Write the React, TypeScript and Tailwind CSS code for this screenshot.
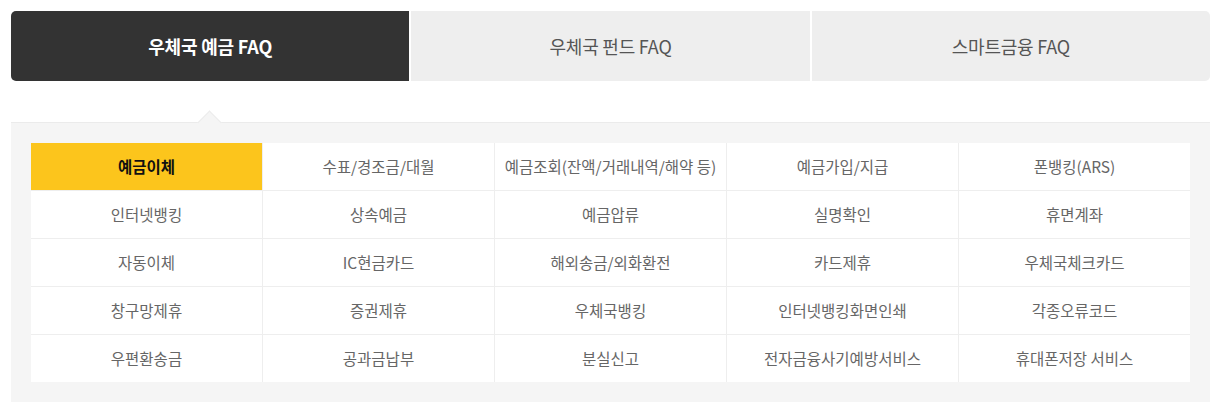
import React from 'react';

const tabs = ['우체국 예금 FAQ', '우체국 펀드 FAQ', '스마트금융 FAQ'];

const categories = [
    '예금이체', '수표/경조금/대월', '예금조회(잔액/거래내역/해약 등)', '예금가입/지급', '폰뱅킹(ARS)',
    '인터넷뱅킹', '상속예금', '예금압류', '실명확인', '휴면계좌',
    '자동이체', 'IC현금카드', '해외송금/외화환전', '카드제휴', '우체국체크카드',
    '창구망제휴', '증권제휴', '우체국뱅킹', '인터넷뱅킹화면인쇄', '각종오류코드',
    '우편환송금', '공과금납부', '분실신고', '전자금융사기예방서비스', '휴대폰저장 서비스',
];

export default function App() {
    const activeTab = 0;
    const activeCat = 0;

    return (
        <div
            className="w-[1200px] mx-auto pt-[11px] bg-white"
            style={{ fontFamily: '"Noto Sans CJK KR", "Noto Sans", sans-serif' }}
        >
            {/* Tabs */}
            <ul className="flex gap-[2px] h-[70px] pl-px">
                {tabs.map((tab, i) => (
                    <li
                        key={tab}
                        className={
                            'flex-1 flex items-center justify-center text-[18px] tracking-[-0.2px] ' +
                            (i === 0 ? 'rounded-l-[5px] ' : '') +
                            (i === tabs.length - 1 ? 'rounded-r-[5px] ' : '') +
                            (i === activeTab
                                ? 'bg-[#333333] text-white font-bold'
                                : 'bg-[#eeeeee] text-[#555555]')
                        }
                    >
                        {tab}
                    </li>
                ))}
            </ul>

            {/* Category panel */}
            <div className="relative mt-[41px] ml-px bg-[#f5f5f5] border-t border-[#ebebeb] px-5 pt-5 pb-5">
                <span className="absolute -top-[9px] left-[190px] w-[17px] h-[17px] rotate-45 bg-[#f5f5f5] border-l border-t border-[#ebebeb]" />
                <div className="relative grid grid-cols-5 gap-px bg-[#eeeeee]">
                    {categories.map((cat, i) => (
                        <a
                            key={cat}
                            href="#"
                            className={
                                'h-[47px] flex items-center justify-center text-[15.5px] ' +
                                (i === activeCat
                                    ? 'bg-[#fcc51c] text-[#111111] font-bold'
                                    : 'bg-white text-[#666666]')
                            }
                        >
                            {cat}
                        </a>
                    ))}
                </div>
            </div>
        </div>
    );
}
